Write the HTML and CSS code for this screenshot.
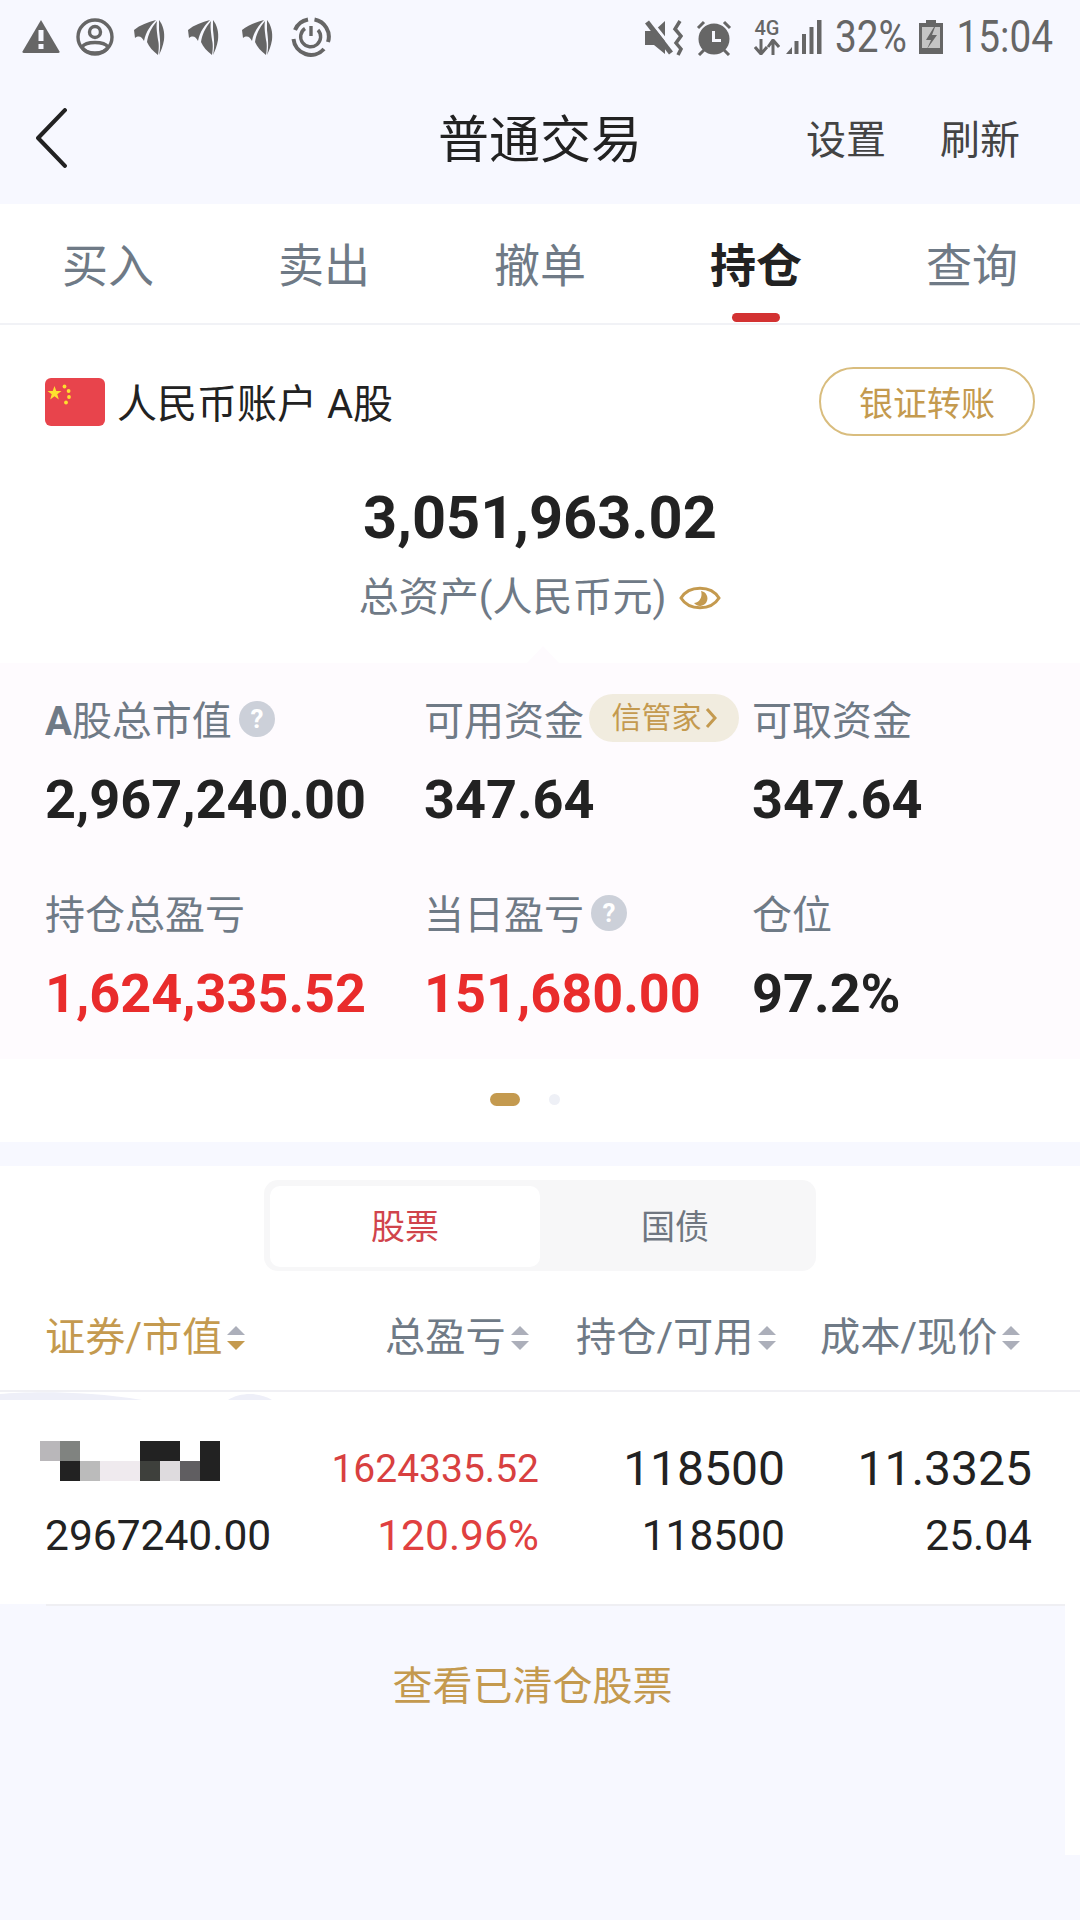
FILE: index.html
```html
<!DOCTYPE html>
<html lang="zh-CN">
<head>
<meta charset="utf-8">
<title>普通交易</title>
<link rel="stylesheet" href="styles.css">
</head>
<body>
<div class="page">
  <header class="status">
    <div class="status-left">
      <svg class="si" viewBox="0 0 40 40"><path d="M20 3 L38.500 34.500 Q39 36 37 36 L3 36 Q1 36 1.500 34.500Z" fill="#666"/><rect x="17.500" y="13" width="5" height="11" fill="#f7f8ff"/><rect x="17.500" y="27" width="5" height="5" fill="#f7f8ff"/></svg>
      <svg class="si" viewBox="0 0 40 40" fill="none" stroke="#666" stroke-width="3.400"><circle cx="20" cy="20" r="17"/><circle cx="20" cy="15" r="5.500"/><path d="M7 30 C11 24 29 24 33 30 C29 38 11 38 7 30Z"/></svg>
      <svg class="si" viewBox="0 0 40 40"><g fill="#666" transform="translate(5 3)"><path d="M0 10 C6 5 14 2 22 0 C17 5 12 11 10 21 C8 17 5 15 1 18Z"/><path d="M23 1 C17 8 14 15 13 22 C15 27 19 31 24 35 C25 28 25 24 24 20 C23 12 22 7 23 1Z"/><path d="M25 0 C29 5 31 12 30 20 C29 26 27 31 25 35 C27 27 26 18 25 10 C25 6 25 3 25 0Z"/></g></svg>
      <svg class="si" viewBox="0 0 40 40"><g fill="#666" transform="translate(5 3)"><path d="M0 10 C6 5 14 2 22 0 C17 5 12 11 10 21 C8 17 5 15 1 18Z"/><path d="M23 1 C17 8 14 15 13 22 C15 27 19 31 24 35 C25 28 25 24 24 20 C23 12 22 7 23 1Z"/><path d="M25 0 C29 5 31 12 30 20 C29 26 27 31 25 35 C27 27 26 18 25 10 C25 6 25 3 25 0Z"/></g></svg>
      <svg class="si" viewBox="0 0 40 40"><g fill="#666" transform="translate(5 3)"><path d="M0 10 C6 5 14 2 22 0 C17 5 12 11 10 21 C8 17 5 15 1 18Z"/><path d="M23 1 C17 8 14 15 13 22 C15 27 19 31 24 35 C25 28 25 24 24 20 C23 12 22 7 23 1Z"/><path d="M25 0 C29 5 31 12 30 20 C29 26 27 31 25 35 C27 27 26 18 25 10 C25 6 25 3 25 0Z"/></g></svg>
      <svg class="si" viewBox="0 0 40 40" fill="none" stroke="#666"><path stroke-width="4" d="M4 13 A17.500 17.500 0 0 1 17 2.500 M23.500 2.500 A17.500 17.500 0 0 1 37 25 M33 32 A17.500 17.500 0 0 1 2.500 22"/><path stroke-width="3.400" d="M14 11.500 A10 10 0 1 0 27 13"/><path stroke-width="3.400" d="M20 9 V19"/></svg>
    </div>
    <div class="status-right">
      <svg class="s-mute" viewBox="0 0 38 36"><path d="M0 11 H9 L20 1 V34 L9 25 H0Z" fill="#666"/><path d="M5 0 L29 30" stroke="#f7f8ff" stroke-width="3"/><path d="M2 2 L26 33" stroke="#666" stroke-width="5"/><path d="M35 1 L30 9 L36 16 L31 23 L36 29 L33 35" stroke="#666" stroke-width="3.500" fill="none"/></svg>
      <svg class="s-alarm" viewBox="0 0 36 36"><circle cx="18" cy="19" r="15.500" fill="#666"/><path d="M2 8 L8 2 M34 8 L28 2 M3 35 L8 30 M33 35 L28 30" stroke="#666" stroke-width="3"/><path d="M17.500 11 V20.500 H25" stroke="#f7f8ff" stroke-width="3" fill="none"/></svg>
      <div class="s-net">
        <span class="s-4g">4G</span>
        <svg class="s-arrows" viewBox="0 0 26 16"><path d="M7 0 V14 M1 8 L7 15 L13 8 M19 16 V2 M14 8 L19 1 L25 8" stroke="#666" stroke-width="3" fill="none"/></svg>
      </div>
      <svg class="s-signal" viewBox="0 0 36 34"><path d="M0 34 L6 27 V34Z" fill="#666"/><rect x="8.500" y="21" width="4" height="13" fill="#666"/><rect x="16" y="14" width="4" height="20" fill="#666"/><rect x="23.500" y="7" width="4" height="27" fill="#666"/><rect x="31" y="0" width="4.500" height="34" fill="#666"/></svg>
      <div class="s-pct"><span class="narrow">32%</span></div>
      <svg class="s-batt" viewBox="0 0 24 34"><path d="M7 0 H17 V3 H24 V34 H0 V3 H7Z" fill="#666"/><rect x="3" y="7" width="18" height="21" fill="#c4c4c4"/><path d="M15 7 L7 20 H12 L8 29 L18 15 H13 L16 7Z" fill="#666"/></svg>
      <div class="s-time"><span class="narrow">15:04</span></div>
    </div>
  </header>

  <nav class="nav">
    <svg class="back" viewBox="0 0 32 58" fill="none"><path d="M29 2 L3 29 L29 56" stroke="#222" stroke-width="4" stroke-linecap="round" stroke-linejoin="round"/></svg>
    <h1 class="nav-title">普通交易</h1>
    <div class="nav-actions"><span>设置</span><span>刷新</span></div>
  </nav>

  <div class="tabs">
    <div class="tab">买入</div>
    <div class="tab">卖出</div>
    <div class="tab">撤单</div>
    <div class="tab tab-active">持仓</div>
    <div class="tab">查询</div>
  </div>

  <section class="account">
    <div class="account-row">
      <div class="account-name">
        <svg class="flag" viewBox="0 0 60 48"><rect width="60" height="48" rx="6" fill="#e8444c"/><g fill="#fde02f"><path d="M9.500 8 L11.300 13 L16.500 13 L12.300 16.200 L13.800 21.500 L9.500 18.300 L5.200 21.500 L6.700 16.200 L2.500 13 L7.700 13Z"/><circle cx="19.500" cy="8.500" r="1.900"/><circle cx="23.600" cy="13" r="1.900"/><circle cx="24" cy="19" r="1.900"/><circle cx="21" cy="24.500" r="1.900"/></g></svg>
        <span>人民币账户 A股</span>
      </div>
      <button class="transfer">银证转账</button>
    </div>
    <div class="total">3,051,963.02</div>
    <div class="total-label">
      <span>总资产(人民币元)</span>
      <svg class="eye" viewBox="0 0 42 24"><path d="M2 12 C10 -1 32 -1 40 12 C32 25 10 25 2 12Z" fill="none" stroke="#c49a4f" stroke-width="3"/><path d="M22 5 A7.500 7.500 0 1 1 15 17 C20 17 24 11 22 5Z" fill="#c49a4f"/></svg>
    </div>
  </section>

  <section class="summary">
    <div class="cell">
      <div class="label"><span><b class="label-a">A</b>股总市值</span><span class="help">?</span></div>
      <div class="value">2,967,240.00</div>
    </div>
    <div class="cell">
      <div class="label"><span>可用资金</span><span class="badge">信管家<svg class="badge-arrow" viewBox="0 0 12 22"><path d="M2 2 L10 11 L2 20" fill="none" stroke="#c49a4f" stroke-width="3"/></svg></span></div>
      <div class="value">347.64</div>
    </div>
    <div class="cell">
      <div class="label"><span>可取资金</span></div>
      <div class="value">347.64</div>
    </div>
    <div class="cell">
      <div class="label"><span>持仓总盈亏</span></div>
      <div class="value value-red">1,624,335.52</div>
    </div>
    <div class="cell">
      <div class="label"><span>当日盈亏</span><span class="help">?</span></div>
      <div class="value value-red">151,680.00</div>
    </div>
    <div class="cell">
      <div class="label"><span>仓位</span></div>
      <div class="value">97.2%</div>
    </div>
  </section>

  <div class="pager"><span class="dot dot-on"></span><span class="dot"></span></div>

  <section class="holdings">
    <div class="segment-wrap">
      <div class="segment">
        <div class="seg seg-on">股票</div>
        <div class="seg">国债</div>
      </div>
    </div>
    <div class="thead">
      <div class="th th-active">证券/市值<svg class="sort" viewBox="0 0 18 24"><path d="M9 0 L18 9 H0Z" fill="#acafba"/><path d="M9 24 L18 15 H0Z" fill="#c49a4f"/></svg></div>
      <div class="th">总盈亏<svg class="sort" viewBox="0 0 18 24"><path d="M9 0 L18 9 H0Z" fill="#acafba"/><path d="M9 24 L18 15 H0Z" fill="#acafba"/></svg></div>
      <div class="th">持仓/可用<svg class="sort" viewBox="0 0 18 24"><path d="M9 0 L18 9 H0Z" fill="#acafba"/><path d="M9 24 L18 15 H0Z" fill="#acafba"/></svg></div>
      <div class="th">成本/现价<svg class="sort" viewBox="0 0 18 24"><path d="M9 0 L18 9 H0Z" fill="#acafba"/><path d="M9 24 L18 15 H0Z" fill="#acafba"/></svg></div>
    </div>
    <div class="row">
      <svg class="swoosh" viewBox="0 0 280 8"><path d="M0 2 C30 -1 90 -1 142 8 H0Z M228 8 C240 0 260 0 272 8Z" fill="#eeeff8"/></svg>
      <div class="col-name">
        <div class="mosaic">
          <i class="m1"></i><i class="m2"></i><i></i><i></i><i></i><i class="md"></i><i class="md"></i><i></i><i class="md"></i>
          <i></i><i class="md"></i><i class="m3"></i><i class="m4"></i><i class="m4"></i><i class="m5"></i><i class="m6"></i><i class="m7"></i><i class="md"></i>
        </div>
        <div class="num-s">2967240.00</div>
      </div>
      <div class="col-num red">
        <div class="num-r">1624335.52</div>
        <div class="num-s">120.96%</div>
      </div>
      <div class="col-num">
        <div class="num-l">118500</div>
        <div class="num-s">118500</div>
      </div>
      <div class="col-num">
        <div class="num-l">11.3325</div>
        <div class="num-s">25.04</div>
      </div>
    </div>
  </section>

  <div class="lower">
    <div class="lower-main"><span class="cleared">查看已清仓股票</span></div>
    <div class="lower-strip"></div>
  </div>
</div>
</body>
</html>
```
FILE: styles.css
```css
* { box-sizing: border-box; }
html, body { margin: 0; padding: 0; }
body {
  width: 1080px;
  height: 1920px;
  overflow: hidden;
  background: #f7f8ff;
  font-family: Roboto, "Noto Sans CJK SC", sans-serif;
  color: #222;
}
.page { width: 1080px; height: 1920px; display: flex; flex-direction: column; }

/* status bar */
.status { height: 70px; padding: 17px 27px 0 21px; display: flex; justify-content: space-between; align-items: flex-start; }
.status-left { display: flex; gap: 14px; }
.si { width: 40px; height: 40px; display: block; }
.status-right { display: flex; align-items: flex-start; padding-top: 3px; }
.s-mute { width: 38px; height: 36px; }
.s-alarm { width: 36px; height: 36px; margin-left: 13px; }
.s-net { width: 26px; margin-left: 22px; display: flex; flex-direction: column; align-items: center; }
.s-4g { font-size: 20px; line-height: 17px; font-weight: 500; color: #666; }
.s-arrows { width: 26px; height: 16px; margin-top: 2px; }
.s-signal { width: 36px; height: 34px; margin-left: 6px; }
.s-pct { width: 69px; margin-left: 14px; font-size: 44px; line-height: 34px; color: #666; display: flex; justify-content: center; }
.s-batt { width: 24px; height: 34px; margin-left: 14px; }
.s-time { width: 96px; margin-left: 14px; font-size: 44px; line-height: 34px; color: #666; display: flex; justify-content: center; }
.narrow { display: inline-block; transform: scaleX(0.88); white-space: nowrap; }

/* nav */
.nav { height: 134px; display: grid; grid-template-columns: 1fr auto 1fr; align-items: center; padding: 8px 36px 0; }
.back { width: 33px; height: 60px; display: block; margin: -7px 0 0 -1px; }
.nav-title { margin: 0; font-size: 51px; line-height: 60px; font-weight: 400; }
.nav-actions { display: flex; justify-content: flex-end; gap: 54px; padding-right: 24px; font-size: 40px; line-height: 50px; color: #444; }

/* tabs */
.tabs { height: 121px; background: #fff; border-bottom: 2px solid #f1f2f6; display: grid; grid-template-columns: repeat(5, 216px); }
.tab { position: relative; text-align: center; font-size: 46px; line-height: 60px; padding-top: 32px; color: #6f7a86; }
.tab-active { color: #222; font-weight: 700; }
.tab-active::after { content: ""; position: absolute; left: 84px; bottom: 1px; width: 48px; height: 9px; border-radius: 5px; background: #d33232; }

/* account */
.account { height: 338px; background: #fff; padding-top: 42px; display: flex; flex-direction: column; }
.account-row { height: 69px; padding: 0 45px; display: flex; align-items: center; justify-content: space-between; }
.account-name { display: flex; align-items: center; gap: 12px; font-size: 40px; line-height: 52px; }
.account-name span { position: relative; top: 3px; }
.flag { width: 60px; height: 48px; display: block; }
.transfer { width: 216px; height: 69px; border: 2px solid #d9bd7e; border-radius: 35px; background: #fff; padding: 0; font: inherit; font-size: 34px; color: #c49a4f; }
.total { margin-top: 47px; text-align: center; font-size: 59.500px; line-height: 70px; font-weight: 700; }
.total-label { margin-top: 23px; display: flex; justify-content: center; align-items: center; gap: 13px; font-size: 40px; line-height: 44px; color: #6f7a86; }
.eye { width: 42px; height: 24px; display: block; }

/* summary */
.summary { position: relative; height: 396px; background: #fefbfe; padding: 39px 0 0 45px; display: grid; grid-template-columns: 379px 328px 1fr; grid-auto-rows: 126px; row-gap: 68px; }
.summary::before { content: ""; position: absolute; left: 527px; top: -17px; border: 16px solid transparent; border-top-width: 0; border-bottom: 17px solid #fefbfe; }
.cell { display: flex; flex-direction: column; gap: 30px; }
.label { height: 40px; display: flex; align-items: center; font-size: 40px; line-height: 40px; color: #6f7a86; }
.label-a { font-weight: 700; }
.help { width: 36px; height: 36px; margin: -6px 0 0 7px; border-radius: 50%; background: #ccd0d9; color: #fff; font-size: 26px; line-height: 36px; text-align: center; font-weight: 700; }
.badge { width: 150px; height: 48px; margin-left: 5px; margin-top: -8px; border-radius: 24px; background: #f1ecdf; color: #c49a4f; font-size: 30px; display: flex; align-items: center; justify-content: center; gap: 3px; }
.badge-arrow { width: 12px; height: 22px; }
.value { font-size: 54px; line-height: 56px; font-weight: 700; color: #222; white-space: nowrap; }
.value-red { color: #e92c2c; }

/* pager */
.pager { height: 83px; background: #fff; display: flex; align-items: center; justify-content: center; gap: 29px; padding: 0 31px 2px 0; }
.dot { width: 11px; height: 11px; border-radius: 50%; background: #eef0f6; }
.dot-on { width: 30px; height: 13px; border-radius: 7px; background: #c49a4f; }

/* holdings */
.holdings { margin-top: 24px; background: #fff; height: 438px; display: flex; flex-direction: column; }
.segment-wrap { padding-top: 14px; display: flex; justify-content: center; }
.segment { width: 552px; height: 91px; padding: 6px; border-radius: 14px; background: #f7f7f8; display: grid; grid-template-columns: 270px 1fr; }
.seg { font-size: 34px; line-height: 79px; padding-top: 2px; text-align: center; color: #6f7680; }
.seg-on { background: #fff; border-radius: 10px; color: #d0444c; }
.thead { height: 121px; padding: 14px 0 0 45px; border-bottom: 2px solid #f0f0f4; display: grid; grid-template-columns: 340px 191px 244px 1fr; align-items: center; }
.th { display: flex; align-items: center; gap: 5px; font-size: 40.200px; line-height: 48px; color: #6f7a86; white-space: nowrap; }
.th-active { color: #c49a4f; }
.sort { width: 18px; height: 24px; display: block; }
.row { position: relative; flex: 1; padding: 49px 47px 0 45px; display: grid; grid-template-columns: 294px 200px 246px 247px; align-content: start; }
.swoosh { position: absolute; left: 0; top: 0; width: 280px; height: 8px; }
.col-name { display: flex; flex-direction: column; }
.mosaic { height: 40px; margin: 0 0 30px -5px; display: grid; grid-template-columns: repeat(9, 20px); grid-auto-rows: 20px; }
.md { background: #222; }
.m1 { background: #b9b7ba; }
.m2 { background: #808380; }
.m3 { background: #bbb; }
.m4 { background: #efeaee; }
.m5 { background: #3e403c; }
.m6 { background: #dedbde; }
.m7 { background: #605e61; }
.col-num { display: flex; flex-direction: column; align-items: flex-end; }
.num-s { font-size: 42.500px; line-height: 50px; color: #222; white-space: nowrap; }
.num-l { font-size: 48px; line-height: 56px; margin-bottom: 14px; white-space: nowrap; }
.num-r { font-size: 39px; line-height: 56px; margin-bottom: 14px; white-space: nowrap; }
.red .num-r { color: #d84040; }
.red .num-s { color: #e04040; }

/* lower */
.lower { flex: 1; display: flex; align-items: flex-start; }
.lower-main { flex: 1; height: 100%; border-top: 2px solid #efeff3; margin-left: 46px; padding: 0; position: relative; }
.cleared { position: absolute; left: -46px; right: 0; top: 53px; text-align: center; font-size: 40px; line-height: 56px; color: #c49a4f; }
.lower-strip { width: 15px; height: 251px; background: #fff; }
```
